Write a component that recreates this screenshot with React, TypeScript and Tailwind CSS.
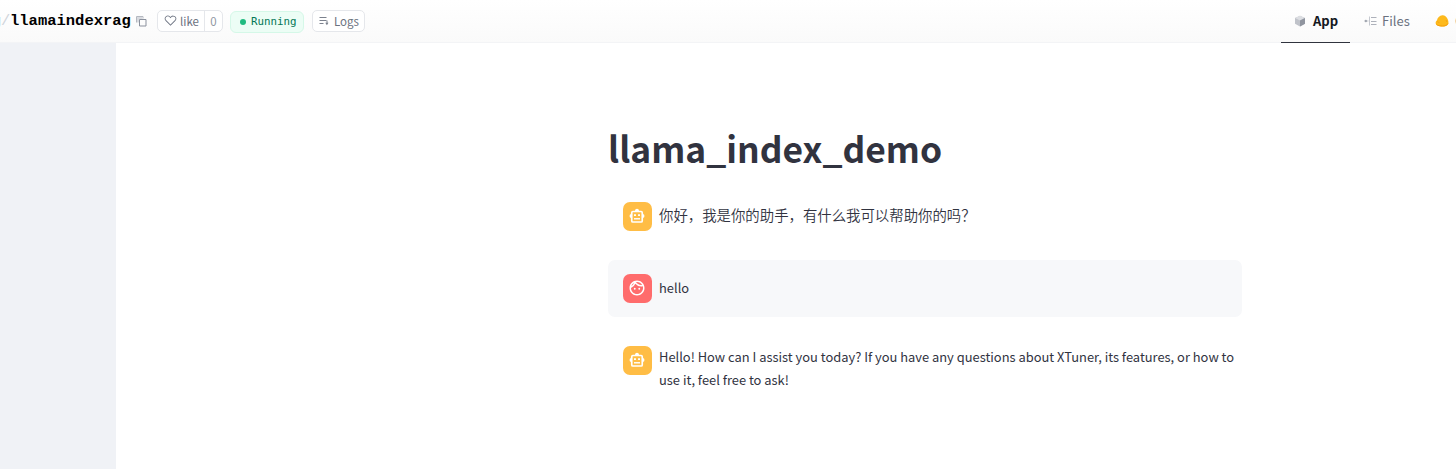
import React from "react";
import { MdOutlineFace } from "react-icons/md";

function CopyIcon() {
  return (
    <svg className="h-[11px] w-[11px] shrink-0" viewBox="0 0 11 11" fill="none" stroke="#8b919d">
      <path d="M.5 6.500V.5h6.500v2" stroke="#b4b8c0" />
      <path d="M1 1h5.500v2H3v3.500H1Z" fill="#d9dbe0" stroke="none" />
      <path d="M3.500 3.500h6.500v6.500H3.500Z" />
    </svg>
  );
}

function HeartIcon() {
  return (
    <svg className="h-[13px] w-[13px] shrink-0" viewBox="0 0 32 32" fill="#6b7280">
      <path d="M22.45,6a5.47,5.47,0,0,1,3.91,1.64,5.7,5.7,0,0,1,0,8L16,26.13,5.64,15.64a5.7,5.7,0,0,1,0-8,5.48,5.48,0,0,1,7.82,0L16,10.24l2.53-2.58A5.44,5.44,0,0,1,22.45,6m0-2a7.47,7.47,0,0,0-5.34,2.24L16,7.36,14.89,6.24a7.49,7.49,0,0,0-10.68,0,7.72,7.72,0,0,0,0,10.82L16,29,27.79,17.06a7.72,7.72,0,0,0,0-10.82A7.49,7.49,0,0,0,22.45,4Z" />
    </svg>
  );
}

function LogsIcon() {
  return (
    <svg className="h-[10px] w-[10px] shrink-0" viewBox="0 0 10 10" fill="none" stroke="#7b818d">
      <path d="M.5 1.500h7M.5 4.500h7M.5 7.500h4" />
      <path d="M8 4.500v3" />
      <path d="M6.300 6.800h3.200L7.900 9.200Z" fill="#7b818d" stroke="none" />
    </svg>
  );
}

function CubeIcon() {
  return (
    <svg className="h-[12px] w-[12px] shrink-0" viewBox="0 0 12 12">
      <path d="M6 .7 11 3v5.8L6 11.4 1 8.8V3Z" fill="#c0c3ca" />
      <path d="M6 .7 11 3 6 5.5 1 3Z" fill="#dcdee2" />
      <path d="M6 5.5 11 3v5.8L6 11.4Z" fill="#90959f" />
    </svg>
  );
}

function FilesIcon() {
  return (
    <svg className="h-[12px] w-[13px] shrink-0" viewBox="0 0 13 12" fill="none">
      <circle cx="1.8" cy="6" r="1.3" fill="#a2a7b0" />
      <path d="M3 6h1.500M5.500 1.500v9" stroke="#c5c8cf" />
      <path d="M7 2.500h5.500M7 6.500h5.500M7 9.500h5.500" stroke="#adb1ba" />
    </svg>
  );
}

function CommunityIcon() {
  return (
    <svg className="h-[14px] w-[14px] shrink-0" viewBox="0 0 14 14">
      <path
        d="M.7 9.600C.4 8.400 1 7.300 2 6.300 2.300 4 4.600 1.600 7.300 1.300c2.400-.2 4 1.300 5 3.200.9 1.700 1.600 3.800.9 5.400-1 2-3.400 2.600-5.900 2.600C4.200 12.500 1.300 12 .7 9.600Z"
        fill="#fdb91c"
      />
      <path d="M1.200 9.900c1.300 1.900 4 2.100 6.300 2.100 2.400 0 4.700-.6 5.500-2.500" stroke="#f59e0b" strokeWidth="1" fill="none" />
      <path d="M2.300 7.500c1 .2 1.600.8 2 1.500M11 6l.9 2" stroke="#f3a00f" strokeWidth=".8" fill="none" />
    </svg>
  );
}

function RobotIcon() {
  return (
    <svg className="h-[18px] w-[18px]" viewBox="0 0 24 24" fill="none" stroke="currentColor">
      <rect x="5" y="6" width="14" height="14" rx="1.500" strokeWidth="2.200" />
      <path d="M12 2.200a2.600 2.600 0 0 1 2.600 2.600V6H9.400V4.800A2.600 2.600 0 0 1 12 2.200Z" fill="currentColor" stroke="none" />
      <path d="M4.500 9.200v5.600a2.900 2.900 0 0 1 0-5.600ZM19.500 9.200v5.600a2.900 2.900 0 0 0 0-5.600Z" fill="currentColor" strokeWidth=".6" />
      <path d="M8 10.700h2.600M13.400 10.700h2.600" strokeWidth="2.400" />
      <path d="M8 15.700h8" strokeWidth="1.900" />
    </svg>
  );
}

function Message({ role, children }: { role: "assistant" | "user"; children: React.ReactNode }) {
  const user = role === "user";
  return (
    <div className={`flex w-[634px] gap-[7px] rounded-[7px] px-[15px] py-[14px] ${user ? "bg-[#f7f8fa]" : ""}`}>
      <div
        className={`flex h-[29px] w-[29px] shrink-0 items-center justify-center rounded-[7px] pr-px pb-px text-white ${
          user ? "bg-[#ff6c6c]" : "bg-[#ffbd45]"
        }`}
      >
        {user ? <MdOutlineFace size={18} /> : <RobotIcon />}
      </div>
      {children}
    </div>
  );
}

export default function App() {
  return (
    <div className="flex h-[469px] w-[1456px] flex-col overflow-hidden bg-white font-['Noto_Sans_CJK_SC',sans-serif] text-[#31333f]">
      <header className="flex h-[43px] shrink-0 items-start justify-between overflow-hidden bg-linear-to-b from-white to-[#fafafa] shadow-[inset_0_-1px_0_#f3f4f6]">
        <div className="flex h-[42px] items-center">
          <div className="-ml-[8px] flex font-['Liberation_Mono',monospace] text-[15.500px] leading-5">
            <span className="w-[9px] text-[#8e9db5]">g</span>
            <span className="w-[9px] text-[#d1d5db]">/</span>
            <span className="w-[126px] font-bold text-black">llamaindexrag</span>
          </div>
          <CopyIcon />
          <div className="ml-[10px] flex h-[22px] w-[66px] items-center rounded-[5px] border border-[#e5e7eb] bg-white text-[11.500px] leading-5 text-[#6b7280]">
            <span className="flex h-full w-[47px] items-center gap-[3px] border-r border-[#e5e7eb] pb-px pl-[6px]">
              <HeartIcon />
              like
            </span>
            <span className="flex-1 pb-px text-center text-[#9097a2]">0</span>
          </div>
          <div className="mt-[2px] ml-[7px] flex h-[22px] w-[74px] items-center rounded-[6px] border border-[#d5f8e8] bg-[#ecfdf5] pl-[9px] font-['DejaVu_Sans_Mono',monospace] text-[10.800px] text-[#047857]">
            <span className="mr-[5px] h-[6px] w-[6px] shrink-0 rounded-full bg-[#1fbb80]" />
            Running
          </div>
          <div className="ml-2 flex h-[22px] w-[53px] items-center gap-[5px] rounded-[5px] border border-[#e5e7eb] bg-white pb-px pl-[6px] text-[11.500px] leading-5 text-[#6b7280]">
            <LogsIcon />
            Logs
          </div>
        </div>
        <nav className="flex h-[43px] w-[175px] shrink-0 text-[13px] leading-5">
          <div className="flex h-[43px] w-[69px] shrink-0 items-center gap-[7px] border-b border-[#30343e] pb-px pl-[13px] font-bold text-[#15181f]">
            <CubeIcon />
            App
          </div>
          <div className="flex h-[41px] w-[85px] shrink-0 items-center gap-[5px] pl-[14px] text-[#6b7280]">
            <FilesIcon />
            Files
          </div>
          <div className="flex h-[42px] shrink-0 items-center">
            <CommunityIcon />
            <span className="ml-[6px] text-[#6b7280]">Community</span>
          </div>
        </nav>
      </header>
      <div className="flex min-h-0 flex-1">
        <aside className="w-[116px] shrink-0 bg-[#f0f2f6]" />
        <main className="flex flex-1 flex-col gap-[15px] pt-[81px] pl-[492px]">
          <h1 className="h-[49px] text-[35.400px] leading-[48px] font-bold">llama_index_demo</h1>
          <Message role="assistant">
            <p className="pt-px text-[14.400px] leading-[23px] font-[350]">你好，我是你的助手，有什么我可以帮助你的吗？</p>
          </Message>
          <Message role="user">
            <p className="pt-[2px] pb-px text-[12.900px] leading-[23px]">hello</p>
          </Message>
          <Message role="assistant">
            <p className="-mt-px text-[12.900px] leading-[23px] whitespace-nowrap">
              Hello! How can I assist you today? If you have any questions about XTuner, its features, or how to
              <br />
              use it, feel free to ask!
            </p>
          </Message>
        </main>
      </div>
    </div>
  );
}
